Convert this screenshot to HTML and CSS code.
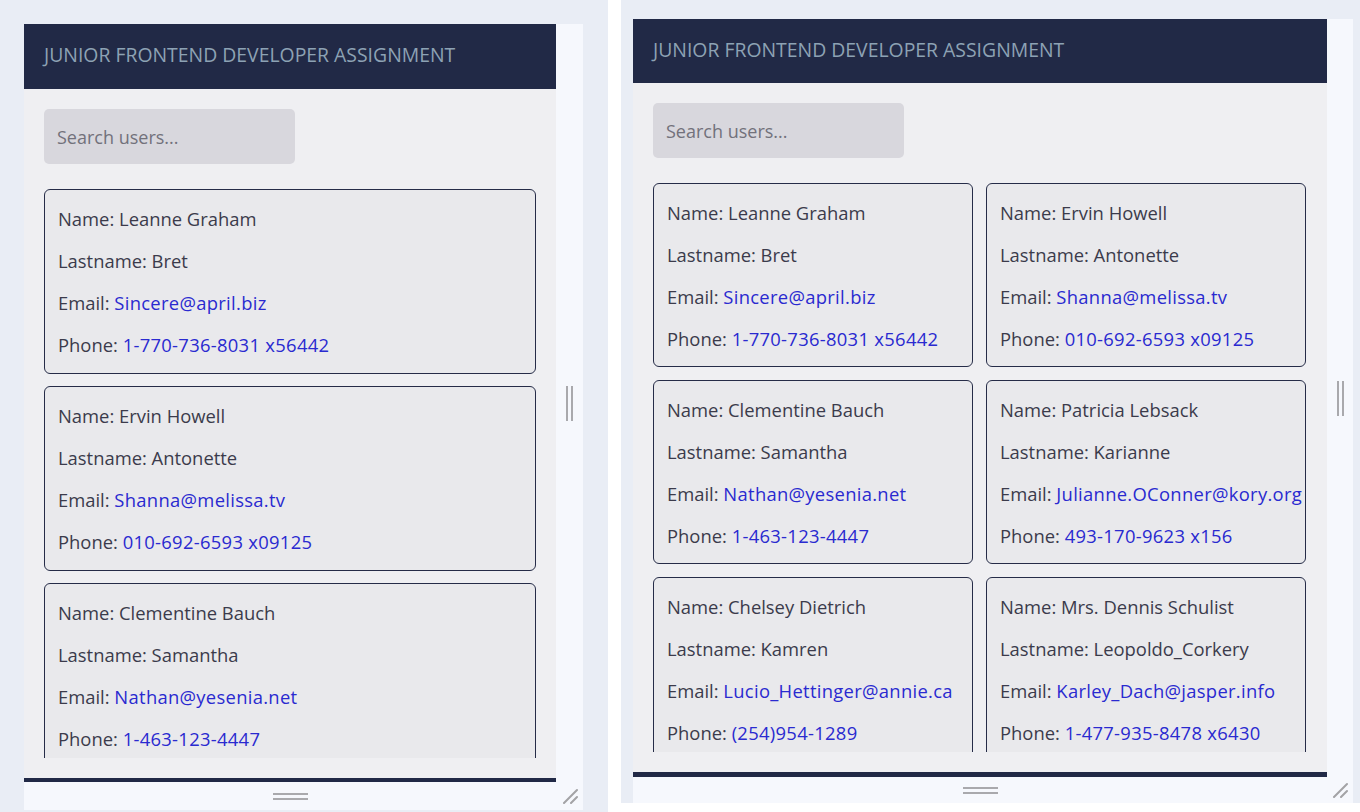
FILE: index.html
```html
<!DOCTYPE html>
<html lang="en">
<head>
<meta charset="utf-8">
<title>Junior Frontend Developer Assignment</title>
<link rel="stylesheet" href="styles.css">
</head>
<body>
  <section class="stage stage-narrow">
    <div class="frame frame-narrow">
      <div class="app app-narrow">
        <header class="app-header"><h1 class="app-title">JUNIOR FRONTEND DEVELOPER ASSIGNMENT</h1></header>
        <main class="app-main">
          <input class="search" type="text" placeholder="Search users...">
          <div class="user-list">
            <article class="card">
              <p>Name: Leanne Graham</p>
              <p>Lastname: Bret</p>
              <p>Email: <a href="#">Sincere@april.biz</a></p>
              <p>Phone: <a href="#">1-770-736-8031 x56442</a></p>
            </article>
            <article class="card">
              <p>Name: Ervin Howell</p>
              <p>Lastname: Antonette</p>
              <p>Email: <a href="#">Shanna@melissa.tv</a></p>
              <p>Phone: <a href="#">010-692-6593 x09125</a></p>
            </article>
            <article class="card">
              <p>Name: Clementine Bauch</p>
              <p>Lastname: Samantha</p>
              <p>Email: <a href="#">Nathan@yesenia.net</a></p>
              <p>Phone: <a href="#">1-463-123-4447</a></p>
            </article>
          </div>
        </main>
        <footer class="app-footer"></footer>
      </div>
      <div class="grip-v"><span class="bars-v"></span></div>
      <div class="grip-h"><span class="bars-h"></span></div>
      <div class="grip-corner">
        <svg width="16" height="16" viewBox="0 0 16 16" aria-hidden="true"><path d="M15 2 L2 15 M15 9 L9 15" stroke="#a3a3a6" stroke-width="2" stroke-linecap="round" fill="none"/></svg>
      </div>
    </div>
  </section>

  <section class="stage stage-wide">
    <div class="frame frame-wide">
      <div class="app app-wide">
        <header class="app-header"><h1 class="app-title">JUNIOR FRONTEND DEVELOPER ASSIGNMENT</h1></header>
        <main class="app-main">
          <input class="search" type="text" placeholder="Search users...">
          <div class="user-grid">
            <article class="card">
              <p>Name: Leanne Graham</p>
              <p>Lastname: Bret</p>
              <p>Email: <a href="#">Sincere@april.biz</a></p>
              <p>Phone: <a href="#">1-770-736-8031 x56442</a></p>
            </article>
            <article class="card">
              <p>Name: Ervin Howell</p>
              <p>Lastname: Antonette</p>
              <p>Email: <a href="#">Shanna@melissa.tv</a></p>
              <p>Phone: <a href="#">010-692-6593 x09125</a></p>
            </article>
            <article class="card">
              <p>Name: Clementine Bauch</p>
              <p>Lastname: Samantha</p>
              <p>Email: <a href="#">Nathan@yesenia.net</a></p>
              <p>Phone: <a href="#">1-463-123-4447</a></p>
            </article>
            <article class="card">
              <p>Name: Patricia Lebsack</p>
              <p>Lastname: Karianne</p>
              <p>Email: <a href="#">Julianne.OConner@kory.org</a></p>
              <p>Phone: <a href="#">493-170-9623 x156</a></p>
            </article>
            <article class="card">
              <p>Name: Chelsey Dietrich</p>
              <p>Lastname: Kamren</p>
              <p>Email: <a href="#">Lucio_Hettinger@annie.ca</a></p>
              <p>Phone: <a href="#">(254)954-1289</a></p>
            </article>
            <article class="card">
              <p>Name: Mrs. Dennis Schulist</p>
              <p>Lastname: Leopoldo_Corkery</p>
              <p>Email: <a href="#">Karley_Dach@jasper.info</a></p>
              <p>Phone: <a href="#">1-477-935-8478 x6430</a></p>
            </article>
          </div>
        </main>
        <footer class="app-footer"></footer>
      </div>
      <div class="grip-v"><span class="bars-v"></span></div>
      <div class="grip-h"><span class="bars-h"></span></div>
      <div class="grip-corner">
        <svg width="16" height="16" viewBox="0 0 16 16" aria-hidden="true"><path d="M15 2 L2 15 M15 9 L9 15" stroke="#a3a3a6" stroke-width="2" stroke-linecap="round" fill="none"/></svg>
      </div>
    </div>
  </section>
</body>
</html>
```

FILE: styles.css
```css
* { box-sizing: border-box; }

html, body {
  margin: 0;
  padding: 0;
  background: #ffffff;
}

body {
  display: flex;
  align-items: flex-start;
  gap: 13px;
  height: 812px;
  overflow: hidden;
  font-family: "Open Sans", "Noto Sans", "Liberation Sans", sans-serif;
}

.stage {
  background: #e9edf5;
}

.stage-narrow {
  width: 608px;
  height: 812px;
  padding: 24px 0 0 24px;
}

.stage-wide {
  flex: 1;
  height: 803px;
  padding: 19px 7px 0 12px;
}

.frame {
  display: grid;
  background: #f6f8fd;
}

.frame-narrow {
  width: 559px;
  grid-template-columns: 532px 27px;
  grid-template-rows: 758px 28px;
}

.frame-wide {
  width: 720px;
  grid-template-columns: 694px 26px;
  grid-template-rows: 758px 26px;
}

.app {
  display: flex;
  flex-direction: column;
  background: #efeff2;
  overflow: hidden;
}

.app-header {
  background: #212946;
  display: flex;
  align-items: center;
  padding: 0 20px 4px;
  flex: none;
}

.app-narrow .app-header { height: 65px; }
.app-wide .app-header { height: 64px; }

.app-title {
  margin: 0;
  font-size: 19.4px;
  font-weight: 400;
  color: #8da2b4;
  white-space: nowrap;
}

.app-main {
  flex: 1;
  min-height: 0;
  display: flex;
  flex-direction: column;
  gap: 25px;
  padding: 20px;
}

.search {
  flex: none;
  width: 251px;
  height: 55px;
  border: none;
  border-radius: 5px;
  background: #d8d7dd;
  padding: 0 13px;
  font-family: inherit;
  font-size: 18px;
  color: #3a3a48;
  outline: none;
}

.search::placeholder {
  color: #72717b;
}

.user-list {
  flex: 1;
  min-height: 0;
  overflow: hidden;
  display: flex;
  flex-direction: column;
  gap: 12px;
}

.user-grid {
  flex: 1;
  min-height: 0;
  overflow: hidden;
  display: grid;
  grid-template-columns: 320px 320px;
  align-content: start;
  column-gap: 13px;
  row-gap: 13px;
}

.card {
  flex: none;
  background: #e9e9ec;
  border: 1px solid #262c48;
  border-radius: 6px;
  padding: 1px 13px 0;
  height: 185px;
}

.user-grid .card { height: 184px; }

.card p {
  margin: 14px 0;
  font-size: 18.4px;
  line-height: 28px;
  color: #3b3b4b;
  white-space: nowrap;
}

.card a {
  color: #2a2ad0;
  text-decoration: none;
  letter-spacing: 0.3px;
}

.app-footer {
  flex: none;
  background: #212946;
}

.app-narrow .app-footer { height: 4px; }
.app-wide .app-footer { height: 5px; }

.grip-v {
  display: flex;
  align-items: center;
  justify-content: center;
}

.bars-v {
  width: 7px;
  height: 35px;
  border-left: 2px solid #a9a9ad;
  border-right: 2px solid #a9a9ad;
}

.grip-h {
  display: flex;
  align-items: center;
  justify-content: center;
}

.bars-h {
  width: 35px;
  height: 7px;
  border-top: 2px solid #a9a9ad;
  border-bottom: 2px solid #a9a9ad;
}

.grip-corner {
  display: flex;
  align-items: center;
  justify-content: center;
}
```
